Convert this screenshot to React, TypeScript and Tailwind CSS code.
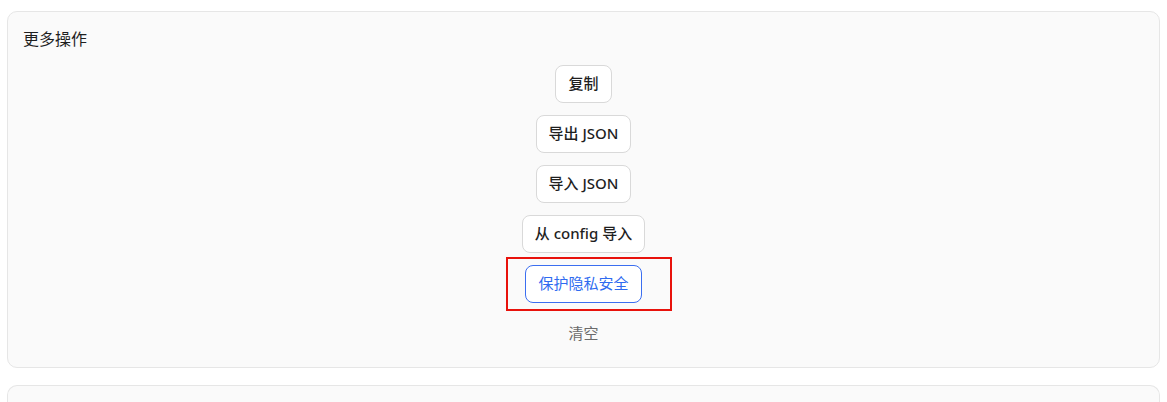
import React from "react";

const font = { fontFamily: '"Noto Sans", "Noto Sans CJK SC", sans-serif' };

function Btn({ children }: { children: React.ReactNode }) {
  return (
    <button className="h-[38px] rounded-lg border border-[#d9d9d9] bg-white px-[12px] pb-[2px] text-[15px] font-medium text-[#1f1f1f] leading-none">
      {children}
    </button>
  );
}

export default function App() {
  return (
    <div className="min-h-[402px] bg-white pl-[7px] pr-[7px] pt-[11px]" style={font}>
      <div className="rounded-[10px] border border-[#e6e6e6] bg-[#fafafa] px-[15px] pt-[15px] pb-[14px]">
        <div className="h-[24px] text-[16px] leading-[24px] text-[#1f1f1f]">更多操作</div>
        <div className="mt-[14px] flex flex-col items-center gap-[12px]">
          <Btn>复制</Btn>
          <Btn>导出 JSON</Btn>
          <Btn>导入 JSON</Btn>
          <Btn>从 config 导入</Btn>
          <div className="relative">
            <button className="h-[38px] rounded-lg border border-[#3b6ef0] bg-white px-[12px] pb-[2px] text-[15px] leading-none text-[#2f6bf0]">
              保护隐私安全
            </button>
            <div className="pointer-events-none absolute -top-[8px] -bottom-[8px] -left-[19px] -right-[30px] border-2 border-[#e8120c]" />
          </div>
          <button className="h-[38px] px-[12px] pb-[2px] text-[15px] leading-none text-[#6b6b6b]">清空</button>
        </div>
      </div>
      <div className="mt-[17px] h-[40px] rounded-t-[10px] border border-b-0 border-[#e6e6e6] bg-[#fafafa]" />
    </div>
  );
}
